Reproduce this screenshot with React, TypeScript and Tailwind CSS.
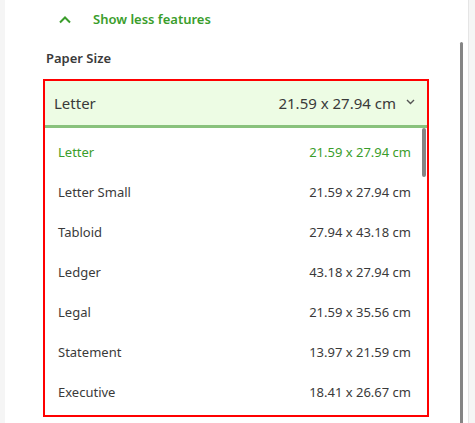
import React from 'react';

const sizes = [
  ['Letter', '21.59 x 27.94 cm'],
  ['Letter Small', '21.59 x 27.94 cm'],
  ['Tabloid', '27.94 x 43.18 cm'],
  ['Ledger', '43.18 x 27.94 cm'],
  ['Legal', '21.59 x 35.56 cm'],
  ['Statement', '13.97 x 21.59 cm'],
  ['Executive', '18.41 x 26.67 cm'],
];

const App = () => {
  return (
    <div
      className="flex w-[475px] h-[423px] overflow-hidden bg-[#f5f5f5]"
      style={{ fontFamily: '"Noto Sans", "Open Sans", sans-serif' }}
    >
      <div className="relative w-[463px] h-full ml-[5px] bg-white">
        {/* toggle */}
        <div className="flex items-center h-[38px] pt-[1px] pl-[54px]">
          <svg width="12" height="8" viewBox="0 0 12 8">
            <path d="M1 6.5 L6 1.5 L11 6.5" fill="none" stroke="#3a9d2b" strokeWidth="2" />
          </svg>
          <span className="ml-[22px] text-[13px] font-semibold text-[#3a9d2b]">Show less features</span>
        </div>

        <div className="pl-[41px] pt-[11px] h-[41px] text-[13px] font-semibold text-[#3a3a3a]">Paper Size</div>

        {/* dropdown */}
        <div className="ml-[38px] w-[386px] border-2 border-[#ff0000]">
          <div className="flex items-center h-[47px] pl-[9px] pr-[12px] bg-[#edfce4] border-b-[3px] border-[#89c27c] text-[15px] text-[#3a3a3a]">
            <span>Letter</span>
            <span className="ml-auto">21.59 x 27.94 cm</span>
            <svg width="9" height="6" viewBox="0 0 9 6" className="ml-[10px] mb-[3px]">
              <path d="M1 1 L4.5 4.5 L8 1" fill="none" stroke="#555" strokeWidth="1.4" />
            </svg>
          </div>
          <div className="relative pt-[5px] pb-[2px]">
            {sizes.map(([name, dim], i) => (
              <div
                key={name}
                className={`flex items-center h-[40px] pl-[13px] pr-[16px] text-[13px] ${
                  i === 0 ? 'text-[#3a9d2b]' : 'text-[#3a3a3a]'
                }`}
              >
                <span>{name}</span>
                <span className="ml-auto">{dim}</span>
              </div>
            ))}
            <div className="absolute right-[1px] top-0 w-[4px] h-[49px] rounded-full bg-[#858585]" />
          </div>
        </div>

        {/* page scrollbar */}
        <div className="absolute left-[455px] top-[42px] bottom-0 w-[3px] rounded-t-full bg-[#858585]" />
      </div>
      <div className="flex-1 border-l border-[#e5e5e5] bg-[#f5f5f5]" />
    </div>
  );
};

export default App;
